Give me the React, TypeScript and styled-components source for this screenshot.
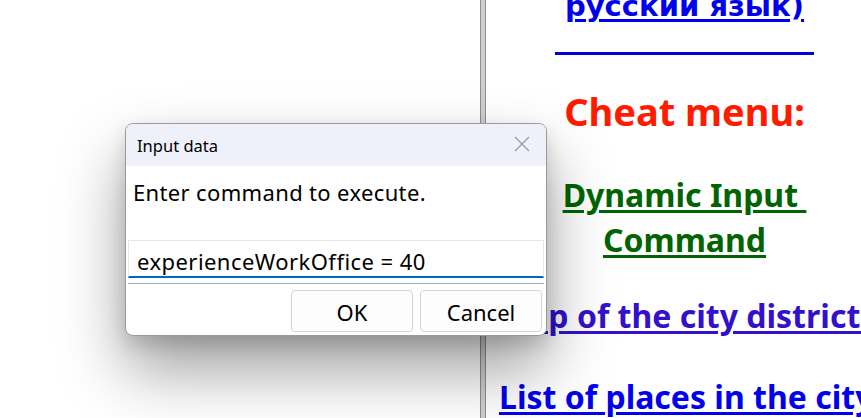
import React from "react";
import styled, { createGlobalStyle } from "styled-components";

const Global = createGlobalStyle`
  html, body { margin: 0; padding: 0; background: #fff; overflow: hidden; }
  body { width: 861px; height: 418px; }
  #root { width: 861px; height: 418px; position: relative; overflow: hidden; }
`;

const Page = styled.div`
  display: flex;
  width: 1000px;
  height: 418px;
  background: #fff;
`;

const LeftPane = styled.div`
  width: 480px;
  flex-shrink: 0;
  background: #fff;
`;

const Splitter = styled.div`
  width: 6px;
  flex-shrink: 0;
  box-sizing: border-box;
  border-left: 1px solid #8e8e8e;
  border-right: 1px solid #8e8e8e;
  background: #cfcfcf;
`;

const Content = styled.div`
  width: 371px;
  flex-shrink: 0;
  margin-left: 13px;
  text-align: center;
  font-family: "Noto Sans", "DejaVu Sans", sans-serif;
  font-weight: 700;
  white-space: nowrap;
  margin-top: -13px;
`;

const Link = styled.a<{ $color: string }>`
  display: block;
  color: ${(p) => p.$color};
  font-size: 32px;
  text-decoration: underline;
  text-decoration-thickness: 3px;
  text-underline-offset: 3px;
  line-height: 45px;
  white-space: pre;
`;

const RuLink = styled(Link)`
  font-family: "DejaVu Sans", sans-serif;
  font-size: 29px;
  line-height: 38px;
`;

const Rule = styled.div`
  width: 70%;
  height: 3px;
  background: #0000dd;
  margin: 27px auto 0;
`;

const Heading = styled.div`
  color: #ff1a00;
  font-size: 38px;
  line-height: 45px;
  margin-top: 34px;
`;

const Block = styled.div<{ $top: number }>`
  margin-top: ${(p) => p.$top}px;
`;

const Dialog = styled.div`
  position: absolute;
  left: 125px;
  top: 123px;
  width: 422px;
  height: 213px;
  box-sizing: border-box;
  border: 1px solid #9a9a9a;
  border-radius: 8px;
  background: #fff;
  overflow: hidden;
  display: flex;
  flex-direction: column;
  font-family: "Noto Sans", "Segoe UI", sans-serif;
  color: #000;
  box-shadow: 0 34px 64px rgba(0, 0, 0, 0.38), 0 8px 18px rgba(0, 0, 0, 0.14);
`;

const TitleBar = styled.div`
  height: 42px;
  background: #eff1fa;
  display: flex;
  align-items: center;
  justify-content: space-between;
  padding: 0 16px 0 11px;
  font-size: 16.5px;
  flex-shrink: 0;
`;

const CloseIcon = styled.svg`
  width: 16px;
  height: 16px;
  margin-top: -2px;
`;

const Prompt = styled.div`
  font-size: 22px;
  padding: 11px 7px 0;
  height: 63px;
  box-sizing: border-box;
  letter-spacing: 0.35px;
`;

const InputBox = styled.div`
  margin: 11px 2px 0;
  height: 38px;
  box-sizing: border-box;
  border: 1px solid #e6e6e6;
  border-bottom: 2px solid #0067c0;
  display: flex;
  align-items: center;
  padding: 4px 8px 0;
  font-size: 22px;
  letter-spacing: 0.45px;
`;

const Divider = styled.div`
  margin: 5px 2px 0;
  height: 1px;
  background: #a8a8a8;
`;

const ButtonRow = styled.div`
  display: flex;
  justify-content: flex-end;
  gap: 7px;
  padding: 6px 4px 0;
`;

const Button = styled.div`
  width: 122px;
  height: 42px;
  box-sizing: border-box;
  border: 1px solid #d4d4d4;
  border-radius: 4px;
  background: #fdfdfd;
  display: flex;
  align-items: center;
  justify-content: center;
  padding-top: 2px;
  font-size: 22px;
`;

export default function App() {
  return (
    <>
      <Global />
      <Page>
        <LeftPane />
        <Splitter />
        <Content>
          <RuLink $color="#0000ee">русский язык)</RuLink>
          <Rule />
          <Heading>Cheat menu:</Heading>
          <Block $top={38}>
            <Link $color="#006400">Dynamic Input </Link>
            <Link $color="#006400">Command</Link>
          </Block>
          <Block $top={31}>
            <Link $color="#3311cc">Map of the city districts</Link>
          </Block>
          <Block $top={36}>
            <Link $color="#0000ee">List of places in the city</Link>
          </Block>
        </Content>
      </Page>
      <Dialog>
        <TitleBar>
          <span>Input data</span>
          <CloseIcon viewBox="0 0 16 16">
            <path d="M1 1 L15 15 M15 1 L1 15" stroke="#9a9a9a" strokeWidth="1.2" fill="none" />
          </CloseIcon>
        </TitleBar>
        <Prompt>Enter command to execute.</Prompt>
        <InputBox>experienceWorkOffice = 40</InputBox>
        <Divider />
        <ButtonRow>
          <Button>OK</Button>
          <Button>Cancel</Button>
        </ButtonRow>
      </Dialog>
    </>
  );
}
